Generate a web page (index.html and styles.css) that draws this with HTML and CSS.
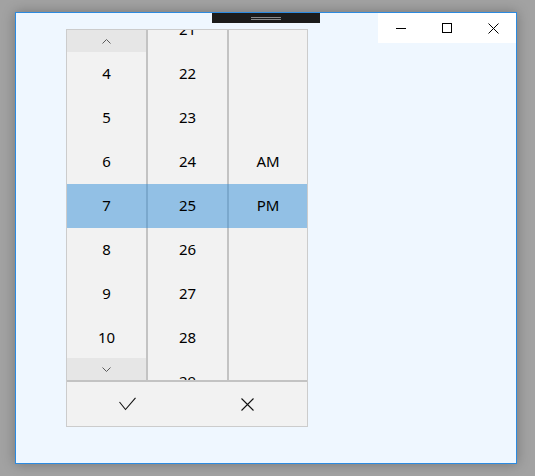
FILE: index.html
```html
<!DOCTYPE html>
<html>
<head>
<meta charset="utf-8">
<link rel="stylesheet" href="styles.css">
</head>
<body>
<div class="window">
  <div class="handle"><span class="grip"></span><span class="grip"></span></div>
  <div class="caption">
    <div class="cap-btn"><svg width="10" height="10" viewBox="0 0 10 10"><line x1="0" y1="5.5" x2="10" y2="5.5" stroke="#000" stroke-width="1"/></svg></div>
    <div class="cap-btn"><svg width="10" height="10" viewBox="0 0 10 10"><rect x="0.5" y="0.5" width="9" height="9" fill="none" stroke="#000" stroke-width="1"/></svg></div>
    <div class="cap-btn"><svg width="11" height="11" viewBox="0 0 11 11"><path d="M0.5 0.5 L10.5 10.5 M10.5 0.5 L0.5 10.5" stroke="#000" stroke-width="1" fill="none"/></svg></div>
  </div>
  <div class="picker">
    <div class="cols">
      <div class="col">
        <div class="list hours">
          <div class="item">4</div>
          <div class="item">5</div>
          <div class="item">6</div>
          <div class="item">7</div>
          <div class="item">8</div>
          <div class="item">9</div>
          <div class="item">10</div>
        </div>
        <div class="step up"><svg width="9" height="5" viewBox="0 0 9 5"><polyline points="0.5,4.5 4.5,0.5 8.5,4.5" fill="none" stroke="#5a5a5a" stroke-width="1"/></svg></div>
        <div class="step down"><svg width="9" height="5" viewBox="0 0 9 5"><polyline points="0.5,0.5 4.5,4.5 8.5,0.5" fill="none" stroke="#5a5a5a" stroke-width="1"/></svg></div>
      </div>
      <div class="col">
        <div class="list shift">
          <div class="item">21</div>
          <div class="item">22</div>
          <div class="item">23</div>
          <div class="item">24</div>
          <div class="item">25</div>
          <div class="item">26</div>
          <div class="item">27</div>
          <div class="item">28</div>
          <div class="item">29</div>
        </div>
      </div>
      <div class="col">
        <div class="list ampm">
          <div class="item">AM</div>
          <div class="item">PM</div>
        </div>
      </div>
      <div class="highlight"></div>
    </div>
    <div class="actions">
      <div class="act"><svg width="17" height="14" viewBox="0 0 17 14"><polyline points="0.5,5 6.5,12.5 16.5,0.8" fill="none" stroke="#111" stroke-width="1.1"/></svg></div>
      <div class="act"><svg width="13" height="13" viewBox="0 0 13 13"><path d="M0.5 0.5 L12.5 12.5 M12.5 0.5 L0.5 12.5" fill="none" stroke="#111" stroke-width="1.1"/></svg></div>
    </div>
  </div>
</div>
</body>
</html>
```

FILE: styles.css
```css
html, body {
  margin: 0;
  padding: 0;
}
body {
  background: #a2a2a2;
  width: 535px;
  height: 476px;
  overflow: hidden;
  padding: 12px 0 0 15px;
  box-sizing: border-box;
  font-family: "Noto Sans", "Open Sans", sans-serif;
}
.window {
  position: relative;
  width: 502px;
  height: 452px;
  box-sizing: border-box;
  border: 1px solid #2b8ae0;
  background: #eff7ff;
  box-shadow: 0 0 12px rgba(0, 0, 0, 0.28);
  padding: 16px 0 0 50px;
}
.handle {
  position: absolute;
  left: 196px;
  top: 0;
  width: 108px;
  height: 10px;
  background: #1b1b1b;
  display: flex;
  flex-direction: column;
  align-items: center;
  padding-top: 4px;
  box-sizing: border-box;
  gap: 1px;
}
.grip {
  display: block;
  width: 30px;
  height: 1px;
  background: #8a8a8a;
}
.caption {
  position: absolute;
  right: 0;
  top: 0;
  display: flex;
  background: #ffffff;
}
.cap-btn {
  width: 46px;
  height: 30px;
  display: flex;
  align-items: center;
  justify-content: center;
}
.picker {
  width: 242px;
  border: 1px solid #cccccc;
  background: #f2f2f2;
  box-sizing: border-box;
}
.cols {
  position: relative;
  display: grid;
  grid-template-columns: 79px 79px 78px;
  column-gap: 2px;
  height: 350px;
  background: #c3c3c3;
  border-bottom: 2px solid #c3c3c3;
}
.col {
  position: relative;
  background: #f2f2f2;
  overflow: hidden;
}
.list {
  display: flex;
  flex-direction: column;
}
.list.hours {
  margin-top: 22px;
}
.list.shift {
  margin-top: -22px;
}
.list.ampm {
  margin-top: 110px;
}
.item {
  position: relative;
  z-index: 1;
  height: 44px;
  box-sizing: border-box;
  padding-bottom: 2px;
  display: flex;
  align-items: center;
  justify-content: center;
  font-size: 15px;
  line-height: 20px;
  color: #000;
}
.step {
  position: absolute;
  left: 0;
  right: 0;
  height: 22px;
  background: #e6e6e6;
  z-index: 2;
  display: flex;
  align-items: center;
  justify-content: center;
}
.step.up {
  top: 0;
}
.step.down {
  bottom: 0;
}
.highlight {
  position: absolute;
  left: 0;
  right: 0;
  top: 154px;
  height: 44px;
  background: rgba(46, 140, 217, 0.49);
}
.actions {
  display: grid;
  grid-template-columns: 1fr 1fr;
  height: 44px;
}
.act {
  display: flex;
  align-items: center;
  justify-content: center;
}
```
